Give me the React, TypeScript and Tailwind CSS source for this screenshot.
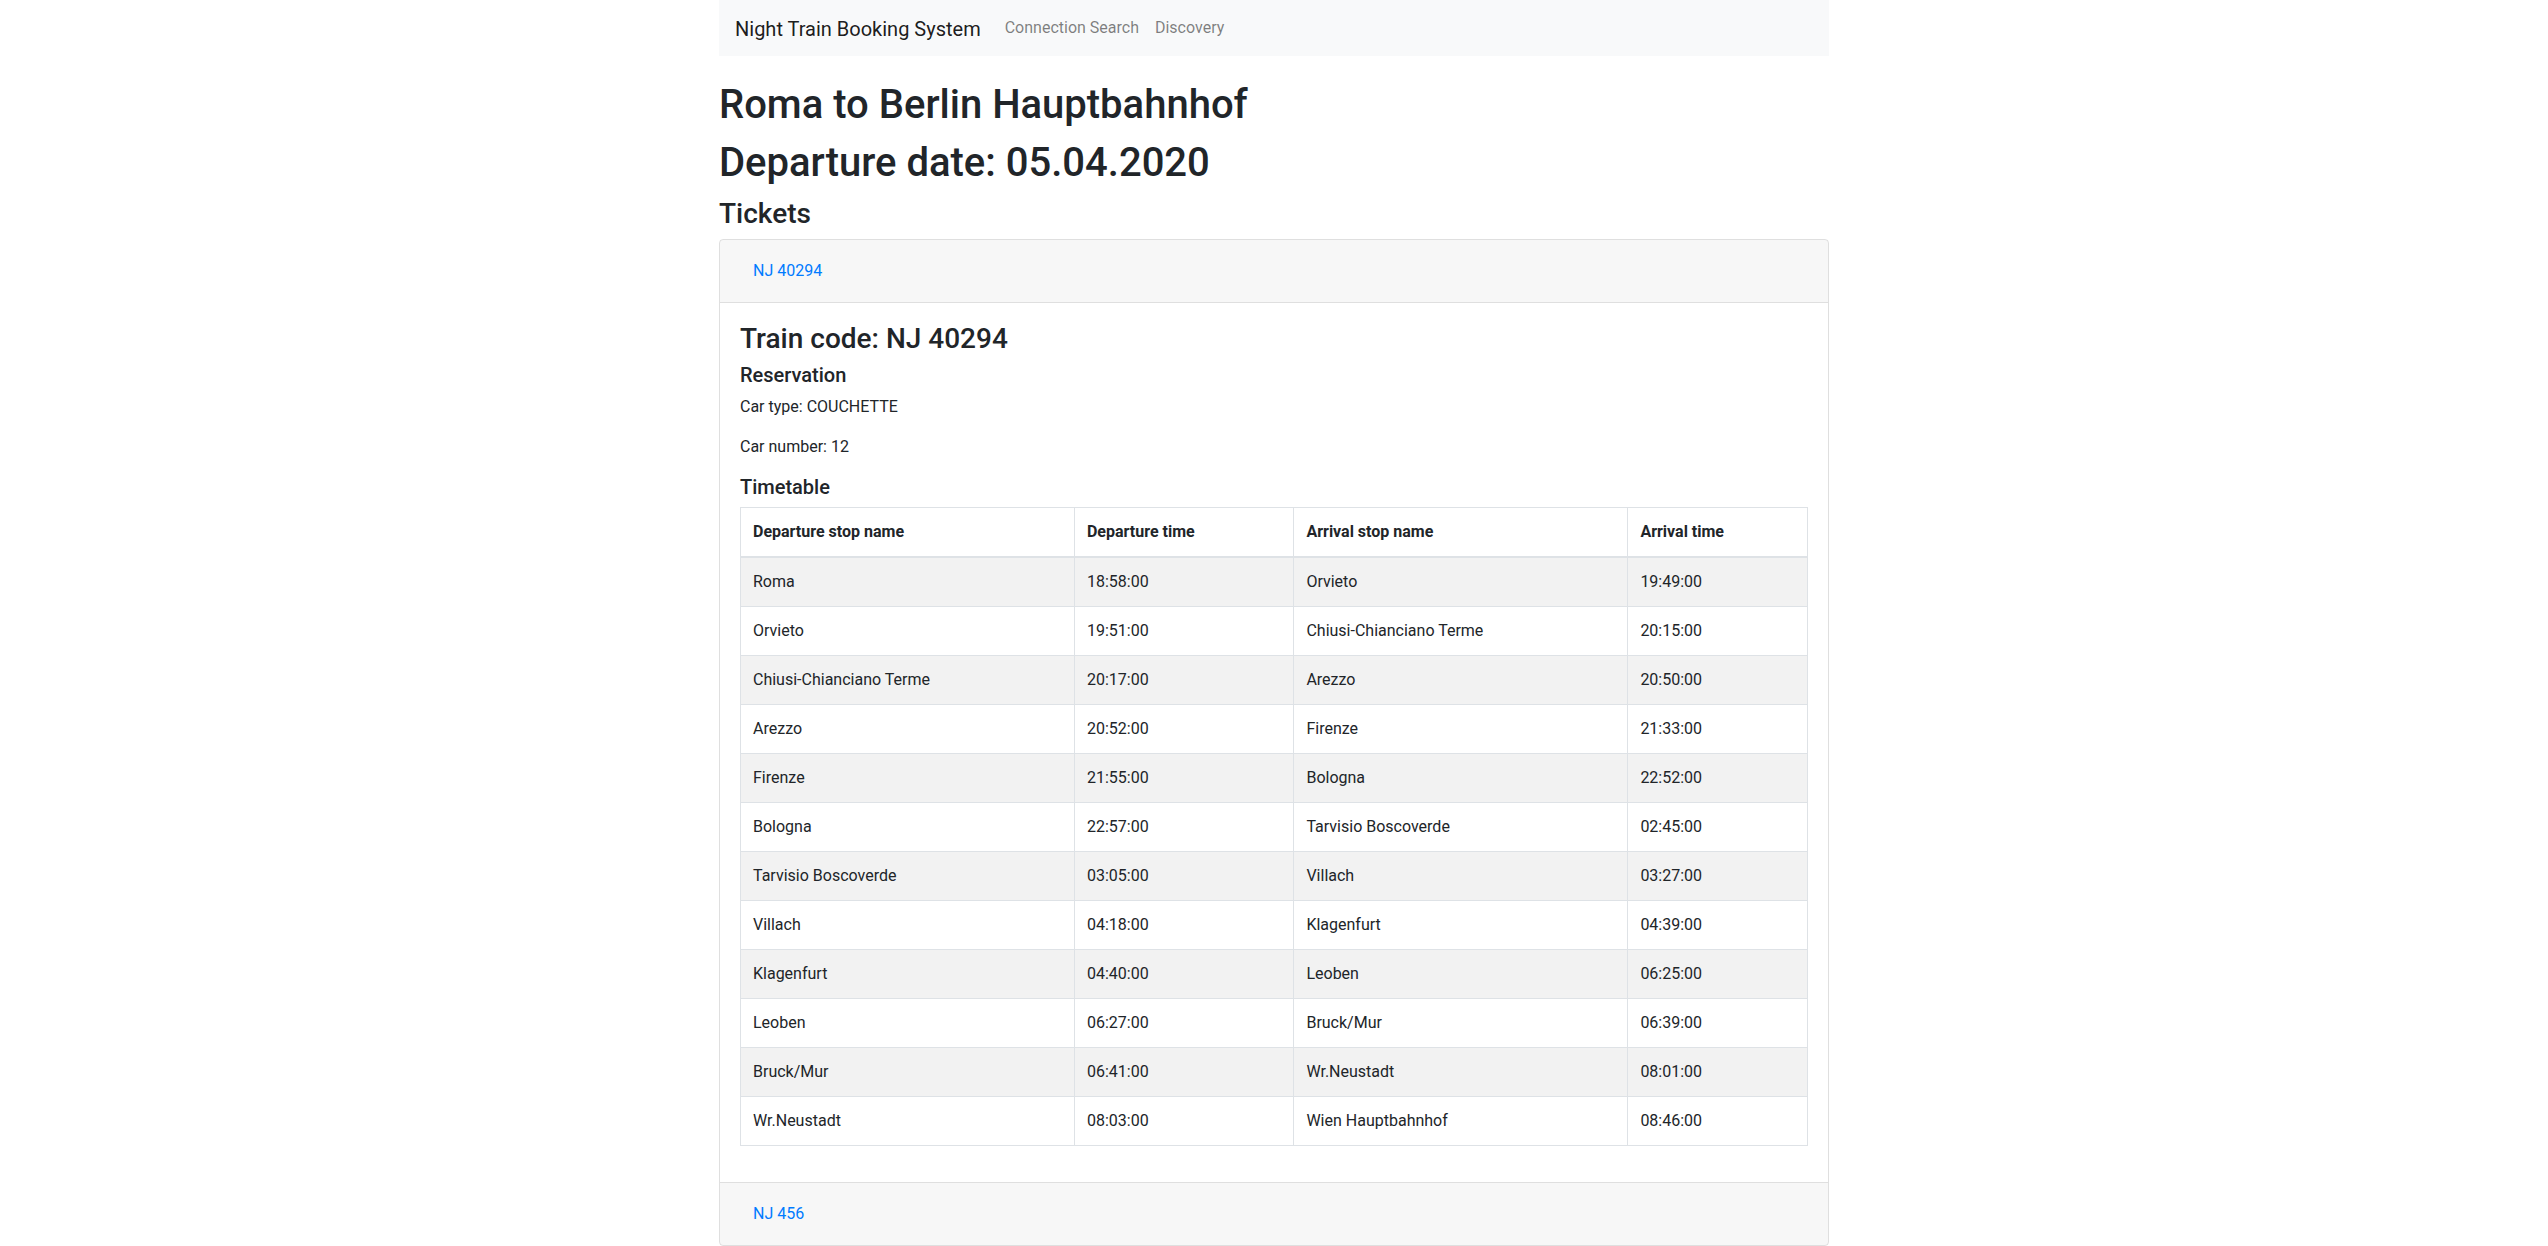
import { ReactElement } from "react";

type Stop = [string, string, string, string];

const timetable: Stop[] = [
  ["Roma", "18:58:00", "Orvieto", "19:49:00"],
  ["Orvieto", "19:51:00", "Chiusi-Chianciano Terme", "20:15:00"],
  ["Chiusi-Chianciano Terme", "20:17:00", "Arezzo", "20:50:00"],
  ["Arezzo", "20:52:00", "Firenze", "21:33:00"],
  ["Firenze", "21:55:00", "Bologna", "22:52:00"],
  ["Bologna", "22:57:00", "Tarvisio Boscoverde", "02:45:00"],
  ["Tarvisio Boscoverde", "03:05:00", "Villach", "03:27:00"],
  ["Villach", "04:18:00", "Klagenfurt", "04:39:00"],
  ["Klagenfurt", "04:40:00", "Leoben", "06:25:00"],
  ["Leoben", "06:27:00", "Bruck/Mur", "06:39:00"],
  ["Bruck/Mur", "06:41:00", "Wr.Neustadt", "08:01:00"],
  ["Wr.Neustadt", "08:03:00", "Wien Hauptbahnhof", "08:46:00"],
];

const headers = ["Departure stop name", "Departure time", "Arrival stop name", "Arrival time"];

function Navbar(): ReactElement {
  return (
    <nav className="flex items-center h-14 px-4 py-2 bg-[#f8f9fa]">
      <a href="#" className="mr-4 pt-[6px] pb-[4px] text-xl leading-[30px] text-black/90">
        Night Train Booking System
      </a>
      <a href="#" className="px-2 py-2 text-black/50">
        Connection Search
      </a>
      <a href="#" className="px-2 py-2 text-black/50">
        Discovery
      </a>
    </nav>
  );
}

function TicketHeader({ code }: { code: string }): ReactElement {
  return (
    <div className="px-5 py-3 bg-black/[.03]">
      <button className="px-3 py-1.5 border border-transparent leading-6 text-[#007bff]">{code}</button>
    </div>
  );
}

function Timetable(): ReactElement {
  return (
    <table className="w-full mb-4 border border-[#dee2e6] border-collapse">
      <thead>
        <tr>
          {headers.map((h) => (
            <th key={h} className="p-3 text-left font-bold align-bottom border border-b-2 border-[#dee2e6]">
              {h}
            </th>
          ))}
        </tr>
      </thead>
      <tbody>
        {timetable.map((row, i) => (
          <tr key={i} className="odd:bg-black/5">
            {row.map((cell, j) => (
              <td key={j} className="p-3 align-top border border-[#dee2e6]">
                {cell}
              </td>
            ))}
          </tr>
        ))}
      </tbody>
    </table>
  );
}

export default function App(): ReactElement {
  return (
    <div className="min-h-screen bg-white font-['Roboto',sans-serif] text-base leading-6 text-[#212529]">
      <div className="mx-auto w-[1110px]">
        <Navbar />
        <h1 className="mt-[25px] mb-[10px] text-[40px] leading-[1.2] font-medium">Roma to Berlin Hauptbahnhof</h1>
        <h1 className="mb-[10px] text-[40px] leading-[1.2] font-medium">Departure date: 05.04.2020</h1>
        <h3 className="mb-2 text-[28px] leading-[1.2] font-medium">Tickets</h3>

        {/* Accordion of tickets */}
        <div className="rounded border border-black/[.125] overflow-hidden">
          <div className="border-b border-black/[.125]">
            <TicketHeader code="NJ 40294" />
          </div>
          <div className="px-5 pt-[19px] pb-5">
            <h3 className="mb-2 text-[28px] leading-[1.2] font-medium">Train code: NJ 40294</h3>
            <h5 className="mb-2 text-xl leading-[1.2] font-medium">Reservation</h5>
            <p className="mb-4">Car type: COUCHETTE</p>
            <p className="mb-4">Car number: 12</p>
            <h5 className="mb-2 text-xl leading-[1.2] font-medium">Timetable</h5>
            <Timetable />
          </div>
          <div className="border-t border-black/[.125]">
            <TicketHeader code="NJ 456" />
          </div>
        </div>
      </div>
    </div>
  );
}
